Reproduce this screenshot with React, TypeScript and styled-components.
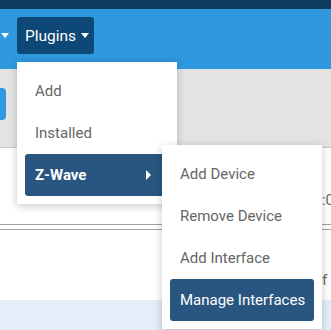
import React from 'react'
import styled, { createGlobalStyle } from 'styled-components'

const GlobalStyle = createGlobalStyle`
  html, body {
    margin: 0;
    padding: 0;
    width: 331px;
    height: 330px;
    overflow: hidden;
    background: #ffffff;
    font-family: Roboto, 'Liberation Sans', sans-serif;
  }
`

const Page = styled.div`
  position: relative;
  width: 331px;
  height: 330px;
  overflow: hidden;
`

const TopBar = styled.div`
  height: 9px;
  background: #0c3c61;
`

const NavBar = styled.nav`
  height: 60px;
  background: #2f98de;
  display: flex;
  align-items: flex-start;
  padding-top: 8px;
  box-sizing: border-box;
`

const PrevItem = styled.div`
  width: 9px;
  height: 37px;
  display: flex;
  align-items: center;
  justify-content: flex-end;
  margin-right: 8px;
`

const Caret = styled.span<{ $dir?: 'down' | 'right' }>`
  display: inline-block;
  width: 0;
  height: 0;
  ${({ $dir }) =>
    $dir === 'right'
      ? `border-top: 5px solid transparent;
         border-bottom: 5px solid transparent;
         border-left: 5px solid #ffffff;`
      : `border-left: 4.5px solid transparent;
         border-right: 4.5px solid transparent;
         border-top: 5px solid #ffffff;`}
`

const DropWrap = styled.div`
  position: relative;
`

const NavButton = styled.button`
  height: 37px;
  width: 77px;
  background: #0e4876;
  border: none;
  border-radius: 3px;
  color: #ffffff;
  font-family: inherit;
  font-size: 15.5px;
  display: flex;
  align-items: center;
  gap: 5px;
  padding: 0 0 0 8px;
`

const Menu = styled.ul<{ $top: number; $left: number }>`
  position: absolute;
  top: ${({ $top }) => $top}px;
  left: ${({ $left }) => $left}px;
  width: 160px;
  margin: 0;
  padding: 8px 0;
  list-style: none;
  background: #ffffff;
  box-shadow: 0 2px 8px rgba(0, 0, 0, 0.22);
  z-index: 5;
`

const Item = styled.li<{ $active?: boolean; $bold?: boolean }>`
  position: relative;
  height: 42px;
  margin: 0 8px;
  padding: 0 10px;
  display: flex;
  align-items: center;
  justify-content: space-between;
  border-radius: 3px;
  font-size: 15px;
  color: ${({ $active }) => ($active ? '#ffffff' : '#666666')};
  background: ${({ $active }) => ($active ? '#285680' : 'transparent')};
  font-weight: ${({ $bold }) => ($bold ? 700 : 400)};
  white-space: nowrap;
`

const SubCaret = styled.span`
  margin-right: 8px;
  display: flex;
`

const GrayBand = styled.div`
  height: 79px;
  box-sizing: border-box;
  background: #e3e3e3;
  border-bottom: 1px solid #c8c8c8;
  padding-top: 19px;
`

const SideButton = styled.div`
  width: 14px;
  height: 32px;
  margin-left: -8px;
  background: #2f98de;
  border-radius: 4px;
`

const Content = styled.div`
  height: 152px;
  display: flex;
  flex-direction: column;
  font-size: 15px;
  color: #666666;
`

const EdgeText = styled.div<{ $top: number; $left: number }>`
  margin-top: ${({ $top }) => $top}px;
  padding-left: ${({ $left }) => $left}px;
  white-space: nowrap;
  line-height: 18px;
`

const DoubleRule = styled.div`
  margin-top: 15px;
  height: 4px;
  border-top: 1px solid #a0a0a0;
  border-bottom: 1px solid #a0a0a0;
`

const InfoBand = styled.div`
  height: 30px;
  background: #e3eef8;
`

export default function App() {
  return (
    <Page>
      <GlobalStyle />
      <TopBar />
      <NavBar>
        <PrevItem>
          <Caret />
        </PrevItem>
        <DropWrap>
          <NavButton>
            Plugins <Caret />
          </NavButton>
          <Menu $top={45} $left={0}>
            <Item>Add</Item>
            <Item>Installed</Item>
            <Item $active $bold>
              Z-Wave
              <SubCaret>
                <Caret $dir='right' />
              </SubCaret>
            </Item>
          </Menu>
          <Menu $top={128} $left={145}>
            <Item>Add Device</Item>
            <Item>Remove Device</Item>
            <Item>Add Interface</Item>
            <Item $active>Manage Interfaces</Item>
          </Menu>
        </DropWrap>
      </NavBar>
      <GrayBand>
        <SideButton />
      </GrayBand>
      <Content>
        <EdgeText $top={43} $left={317}>t:0</EdgeText>
        <DoubleRule />
        <EdgeText $top={41} $left={322}>f</EdgeText>
      </Content>
      <InfoBand />
    </Page>
  )
}
